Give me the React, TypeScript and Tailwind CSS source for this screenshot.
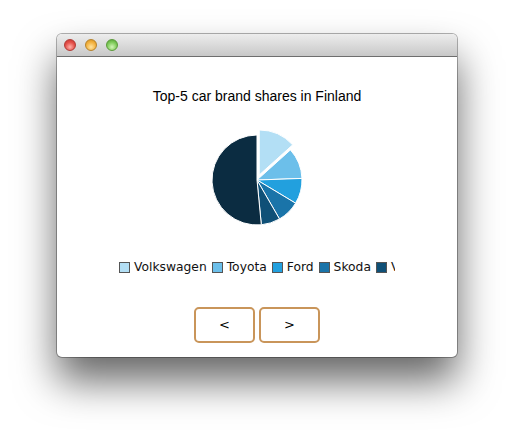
import React from 'react';

const slices = [
  { name: 'Volkswagen', deg: 48, color: '#b3dff5' },
  { name: 'Toyota', deg: 40, color: '#6cbfea' },
  { name: 'Ford', deg: 33, color: '#22a0de' },
  { name: 'Skoda', deg: 29, color: '#1a74a9' },
  { name: 'Volvo', deg: 24.5, color: '#0f5077' },
  { name: 'Others', deg: 185.5, color: '#0b2c41' },
];

const CX = 55;
const CY = 55;
const R = 45;

function pt(a: number, r: number, ox = 0, oy = 0) {
  const rad = (a * Math.PI) / 180;
  return [CX + ox + r * Math.sin(rad), CY + oy - r * Math.cos(rad)];
}

const Pie: React.FC = () => {
  let start = 0;
  return (
    <svg width="110" height="110" viewBox="0 0 110 110">
      {slices.map((s, i) => {
        const end = start + s.deg;
        const mid = (start + end) / 2;
        const off = i === 0 ? 5.5 : 0;
        const rad = (mid * Math.PI) / 180;
        const ox = off * Math.sin(rad);
        const oy = -off * Math.cos(rad);
        const [x1, y1] = pt(start, R, ox, oy);
        const [x2, y2] = pt(end, R, ox, oy);
        const large = s.deg > 180 ? 1 : 0;
        const d = `M${CX + ox},${CY + oy} L${x1},${y1} A${R},${R} 0 ${large} 1 ${x2},${y2} Z`;
        start = end;
        return <path key={s.name} d={d} fill={s.color} stroke="#ffffff" strokeWidth="1" strokeLinejoin="round" />;
      })}
    </svg>
  );
};

export default function App() {
  return (
    <div className="w-[514px] h-[436px] bg-white pt-[34px] pl-[57px]">
      <div className="w-[400px] h-[323px] rounded-[5px] bg-white shadow-[0_24px_40px_rgba(0,0,0,0.6),0_0_0_1px_rgba(0,0,0,0.3)] flex flex-col overflow-hidden">
        {/* title bar */}
        <div className="h-[23px] shrink-0 bg-linear-to-b from-[#ededed] to-[#c8c8c8] border-b border-[#6e6e6e] flex items-center gap-[9px] pl-[7px]">
          <span className="w-[12px] h-[12px] rounded-full border border-[#b03a35] bg-[radial-gradient(circle_at_50%_70%,#ffb0a8,#e4504a_55%,#c7302a)]" />
          <span className="w-[12px] h-[12px] rounded-full border border-[#b6822a] bg-[radial-gradient(circle_at_50%_70%,#ffe4a0,#f3b240_55%,#d48f1d)]" />
          <span className="w-[12px] h-[12px] rounded-full border border-[#5b9a3a] bg-[radial-gradient(circle_at_50%_70%,#d3f5b8,#7fcb5a_55%,#4f9c31)]" />
        </div>

        {/* content */}
        <div className="flex-1 flex flex-col items-center">
          <div className="mt-[31px] text-[14px] leading-[16px] text-black font-['Liberation_Sans',Arial,sans-serif]">
            Top-5 car brand shares in Finland
          </div>

          <div className="mt-[21px]">
            <Pie />
          </div>

          <div className="mt-[24px] w-[276px] overflow-hidden">
            <div className="flex items-center gap-[5px] whitespace-nowrap text-[12.3px] leading-[16px] text-[#111] font-['DejaVu_Sans',sans-serif]">
              {slices.slice(0, 5).map((s) => (
                <div key={s.name} className="flex items-center gap-[4px] shrink-0">
                  <span className="w-[11px] h-[11px] border border-[#555]" style={{ backgroundColor: s.color }} />
                  <span>{s.name}</span>
                </div>
              ))}
            </div>
          </div>

          <div className="mt-[32px] flex gap-[4px]">
            <button className="w-[61px] h-[36px] rounded-[5px] border-2 border-[#c9955a] bg-white text-[13px] text-black font-['DejaVu_Sans',sans-serif]">
              &lt;
            </button>
            <button className="w-[61px] h-[36px] rounded-[5px] border-2 border-[#c9955a] bg-white text-[13px] text-black font-['DejaVu_Sans',sans-serif]">
              &gt;
            </button>
          </div>
        </div>
      </div>
    </div>
  );
}
